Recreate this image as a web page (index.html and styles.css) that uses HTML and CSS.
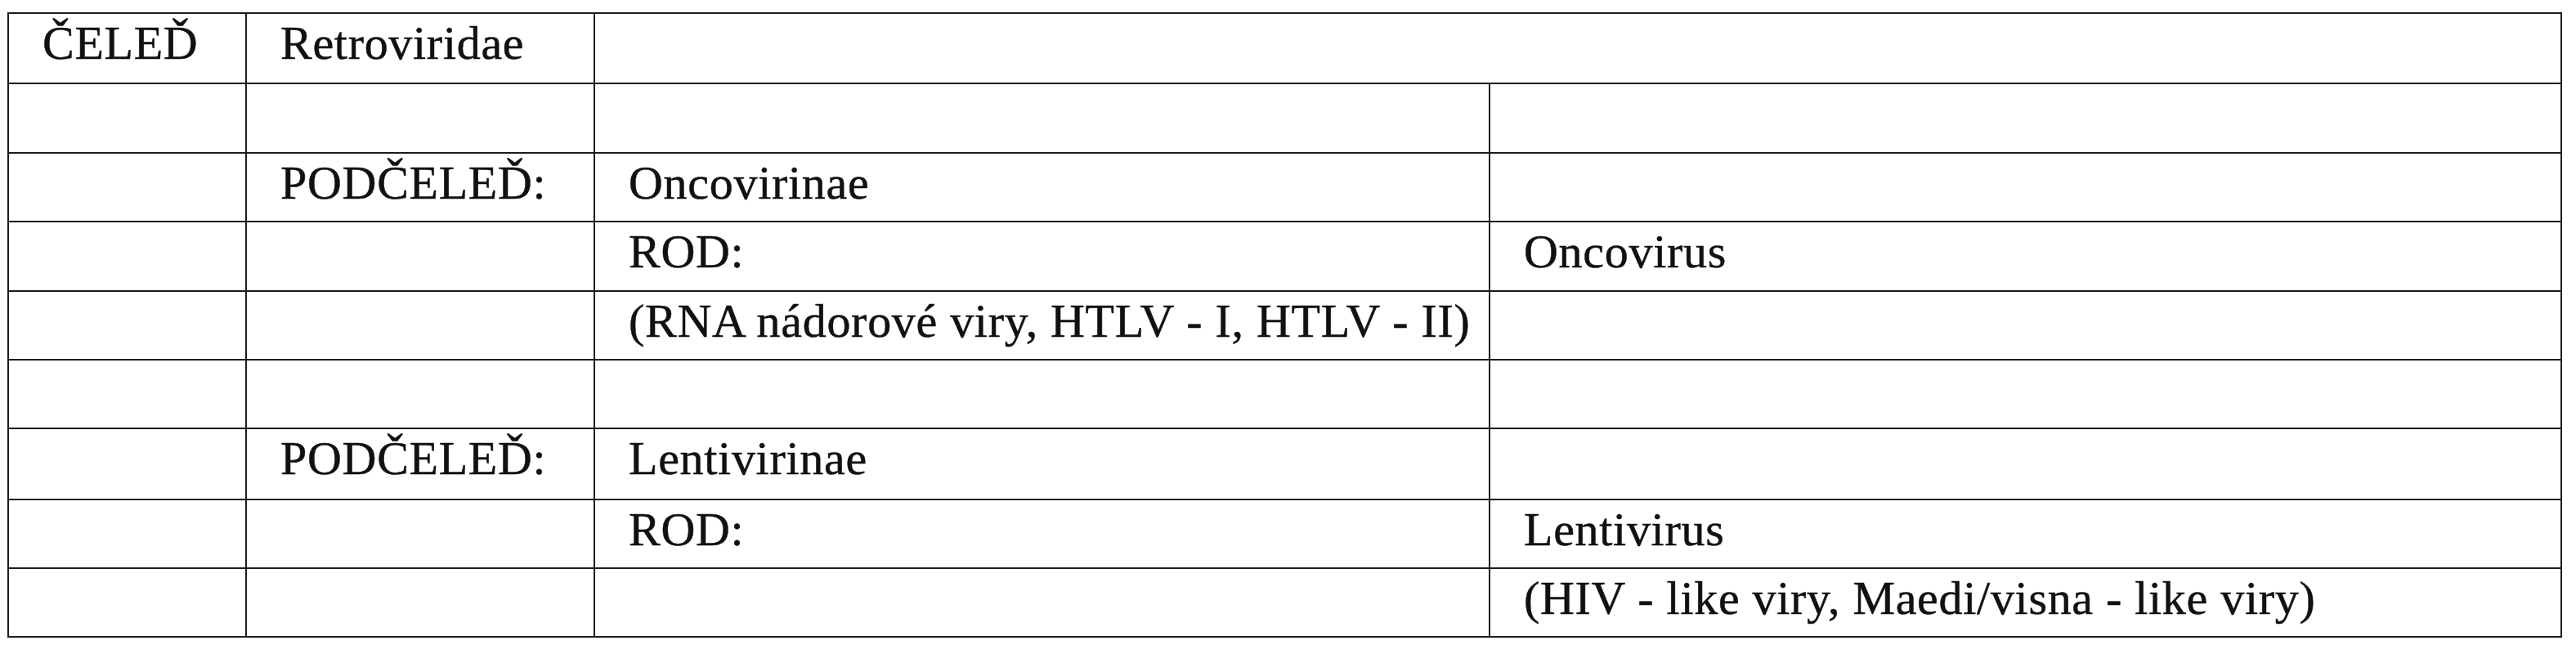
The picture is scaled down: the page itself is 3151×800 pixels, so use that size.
FILE: index.html
```html
<!DOCTYPE html>
<html lang="cs">
<head>
<meta charset="utf-8">
<title>Retroviridae</title>
<link rel="stylesheet" href="styles.css">
</head>
<body>
<table class="taxo">
  <colgroup>
    <col class="c1"><col class="c2"><col class="c3"><col class="c4">
  </colgroup>
  <tr class="first">
    <td>ČELEĎ</td>
    <td>Retroviridae</td>
    <td colspan="2"></td>
  </tr>
  <tr class="r85"><td></td><td></td><td></td><td></td></tr>
  <tr class="r84"><td></td><td>PODČELEĎ:</td><td>Oncovirinae</td><td></td></tr>
  <tr class="r85"><td></td><td></td><td>ROD:</td><td>Oncovirus</td></tr>
  <tr class="r84"><td></td><td></td><td>(RNA nádorové viry, HTLV - I, HTLV - II)</td><td></td></tr>
  <tr class="r84"><td></td><td></td><td></td><td></td></tr>
  <tr class="r87"><td></td><td>PODČELEĎ:</td><td>Lentivirinae</td><td></td></tr>
  <tr class="r84"><td></td><td></td><td>ROD:</td><td>Lentivirus</td></tr>
  <tr class="r84"><td></td><td></td><td></td><td>(HIV - like viry, Maedi/visna - like viry)</td></tr>
</table>
</body>
</html>
```
FILE: styles.css
```css
html, body {
  margin: 0;
  padding: 0;
  background: #ffffff;
}

body {
  font-family: "Liberation Serif", "Times New Roman", serif;
  color: #111111;
}

.taxo {
  border-collapse: collapse;
  table-layout: fixed;
  width: 3123px;
  margin: 15px 0 0 9px;
}

.c1 { width: 291px; }
.c2 { width: 426px; }
.c3 { width: 1095px; }
.c4 { width: 1311px; }

.taxo td {
  border: 2px solid #1c1c1c;
  padding: 4px 0 0 41px;
  vertical-align: top;
  font-size: 58px;
  line-height: 64px;
  letter-spacing: 0.7px;
  -webkit-text-stroke: 0.5px #111111;
  white-space: nowrap;
  overflow: visible;
}

.first { height: 86px; }
.r84 { height: 84px; }
.r85 { height: 85px; }
.r87 { height: 87px; }
```
